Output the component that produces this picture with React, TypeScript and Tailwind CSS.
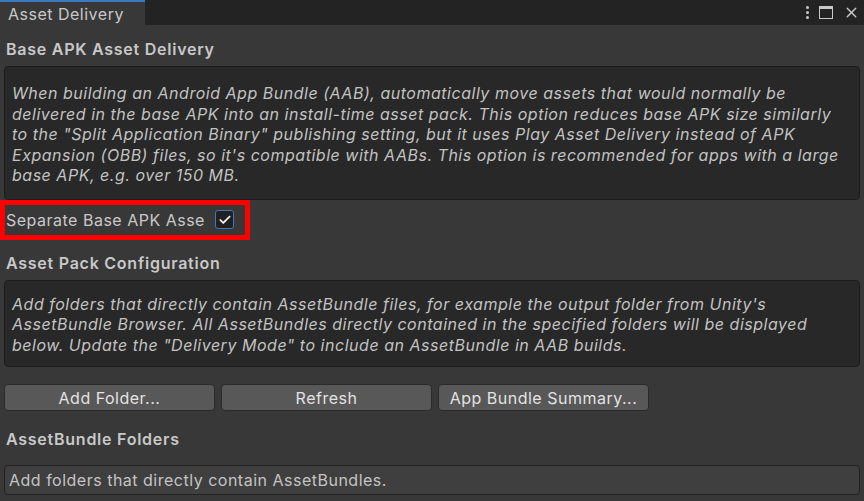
import { Check, X } from "lucide-react";

const font = { fontFamily: "Inter, 'Noto Sans', sans-serif" };

function HelpBox({ lines, className = "" }: { lines: string[]; className?: string }) {
    return (
        <div className={`mx-[4px] whitespace-nowrap rounded-[4px] border border-[#1c1c1c] bg-[#282828] px-[7px] text-[16px] italic leading-[20.5px] tracking-[0.52px] text-[#c2c2c2] ${className}`}>
            {lines.map((l, i) => (
                <div key={i}>{l}</div>
            ))}
        </div>
    );
}

function Heading({ children, className = "" }: { children: React.ReactNode; className?: string }) {
    return (
        <h2 className={`px-[6px] text-[16px] font-semibold tracking-[0.75px] text-[#c8c8c8] ${className}`}>{children}</h2>
    );
}

function UnityButton({ label }: { label: string }) {
    return (
        <button className="h-[27px] w-[211px] rounded-[4px] border border-[#2a2a2a] bg-[#585858] text-[16px] tracking-[0.5px] text-[#e2e2e2]">
            {label}
        </button>
    );
}

export default function App() {
    return (
        <div className="flex h-[501px] w-[864px] flex-col overflow-hidden bg-[#383838]" style={font}>
            {/* Tab bar */}
            <div className="flex h-[25px] shrink-0 items-stretch bg-[#232323]">
                <div className="flex w-[145px] items-center border-t-2 border-[#3a79bb] bg-[#383838] pl-[8px] text-[16px] tracking-[0.5px] text-[#c8c8c8]">
                    Asset Delivery
                </div>
                <div className="ml-auto flex items-center gap-[10px] pr-[4px] text-[#c8c8c8]">
                    <div className="flex flex-col gap-[2px]">
                        <span className="h-[3px] w-[3px] rounded-full bg-[#c8c8c8]" />
                        <span className="h-[3px] w-[3px] rounded-full bg-[#c8c8c8]" />
                        <span className="h-[3px] w-[3px] rounded-full bg-[#c8c8c8]" />
                    </div>
                    <div className="h-[13px] w-[14px] border-[1.5px] border-t-[3px] border-[#c8c8c8]" />
                    <X size={17} strokeWidth={2} />
                </div>
            </div>

            {/* Base APK Asset Delivery */}
            <Heading className="mt-[12px] leading-[25px]">Base APK Asset Delivery</Heading>
            <HelpBox
                className="mt-[4px] pb-[13px] pt-[16px]"
                lines={[
                    "When building an Android App Bundle (AAB), automatically move assets that would normally be",
                    "delivered in the base APK into an install-time asset pack. This option reduces base APK size similarly",
                    "to the \"Split Application Binary\" publishing setting, but it uses Play Asset Delivery instead of APK",
                    "Expansion (OBB) files, so it's compatible with AABs. This option is recommended for apps with a large",
                    "base APK, e.g. over 150 MB.",
                ]}
            />

            <div className="flex h-[40px] w-[250px] shrink-0 items-center border-[5px] border-[#ff0000] pl-[1px]">
                <span className="w-[203px] overflow-hidden whitespace-nowrap text-[16px] tracking-[0.5px] text-[#c8c8c8]">
                    Separate Base APK Asse
                </span>
                <span className="ml-[6px] flex h-[19px] w-[19px] items-center justify-center rounded-[3px] border-[1.5px] border-[#3a79bb] bg-[#202020] text-white">
                    <Check size={14} strokeWidth={3} />
                </span>
            </div>

            {/* Asset Pack Configuration */}
            <Heading className="mt-[11px] leading-[25px]">Asset Pack Configuration</Heading>
            <HelpBox
                className="mt-[4px] pb-[11px] pt-[13px]"
                lines={[
                    "Add folders that directly contain AssetBundle files, for example the output folder from Unity's",
                    "AssetBundle Browser. All AssetBundles directly contained in the specified folders will be displayed",
                    "below. Update the \"Delivery Mode\" to include an AssetBundle in AAB builds.",
                ]}
            />

            <div className="mt-[17px] flex gap-[6px] px-[4px]">
                <UnityButton label="Add Folder..." />
                <UnityButton label="Refresh" />
                <UnityButton label="App Bundle Summary..." />
            </div>

            <Heading className="mt-[16px] leading-[25px]">AssetBundle Folders</Heading>
            <div className="mx-[4px] mt-[13px] flex h-[30px] items-center rounded-[4px] border border-[#222222] bg-[#3f3f3f] px-[4px] text-[16px] tracking-[0.5px] text-[#c4c4c4]">
                Add folders that directly contain AssetBundles.
            </div>
        </div>
    );
}
